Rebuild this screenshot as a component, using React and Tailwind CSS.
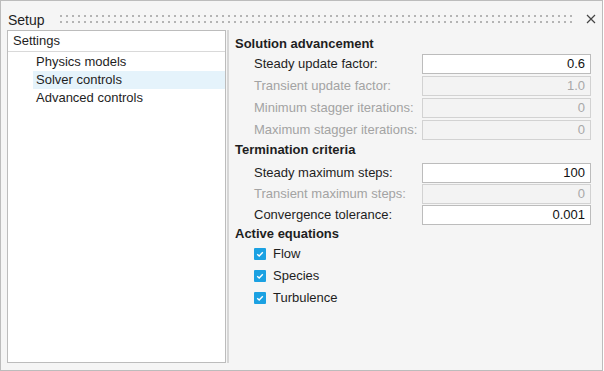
import React from "react";

const font = { fontFamily: '"Liberation Sans", Arial, sans-serif' };

const advancement = [
  { label: "Steady update factor:", value: "0.6", enabled: true },
  { label: "Transient update factor:", value: "1.0" },
  { label: "Minimum stagger iterations:", value: "0" },
  { label: "Maximum stagger iterations:", value: "0" },
];

const termination = [
  { label: "Steady maximum steps:", value: "100", enabled: true },
  { label: "Transient maximum steps:", value: "0" },
  { label: "Convergence tolerance:", value: "0.001", enabled: true },
];

const equations = ["Flow", "Species", "Turbulence"];

function Grip() {
  return (
    <svg width="516" height="8" className="block">
      <defs>
        <pattern id="grip" width="6" height="6" patternUnits="userSpaceOnUse">
          <rect x="0" y="0" width="2" height="2" fill="#b4b4b4" />
        </pattern>
      </defs>
      <rect x="0" y="0" width="516" height="8" fill="url(#grip)" />
    </svg>
  );
}

function CloseIcon() {
  return (
    <svg width="10" height="10" viewBox="0 0 10 10" className="block">
      <path d="M1 1 L9 9 M9 1 L1 9" stroke="#454545" strokeWidth="1.2" fill="none" />
    </svg>
  );
}

function Field({ label, value, enabled, gap }) {
  return (
    <div className={"flex items-center pl-[19px] " + gap}>
      <div className={"w-[168px] text-[13px] leading-[20px] whitespace-nowrap " + (enabled ? "text-[#1e1e1e]" : "text-[#a3a3a3]")}>
        {label}
      </div>
      <div
        className={
          "w-[169px] h-[20px] border px-[5px] text-right text-[13px] leading-[18px] " +
          (enabled ? "bg-white border-[#bcbcbc] text-[#111]" : "bg-[#f3f3f3] border-[#d2d2d2] text-[#a8a8a8]")
        }
      >
        {value}
      </div>
    </div>
  );
}

function Check({ label }) {
  return (
    <div className="flex items-center h-[22px] pl-[19px]">
      <div className="w-[12px] h-[12px] bg-[#1ba1e2] rounded-[1px] flex items-center justify-center">
        <svg width="10" height="10" viewBox="0 0 10 10">
          <path d="M2.2 5.2 L4.2 7 L7.8 3.2" stroke="#fff" strokeWidth="1.4" fill="none" />
        </svg>
      </div>
      <span className="ml-[7px] text-[13px] text-[#1e1e1e]">{label}</span>
    </div>
  );
}

export default function App() {
  return (
    <div style={font} className="w-[603px] h-[371px] bg-[#f5f5f5] border border-[#bcbcbc] flex flex-col">
      <div className="h-[29px] flex items-start shrink-0">
        <span className="ml-[7px] mt-[11px] text-[14px] leading-[16px] text-[#1e1e1e]">Setup</span>
        <div className="ml-[15px] mt-[14px]">
          <Grip />
        </div>
        <div className="ml-[10px] mt-[13px]">
          <CloseIcon />
        </div>
      </div>

      <div className="flex flex-1 pl-[6px] pb-[7px]">
        <div className="w-[219px] border border-[#bcbcbc] bg-white flex flex-col">
          <div className="h-[21px] border-b border-[#d9d9d9] pl-[5px] text-[13px] leading-[20px] text-[#1e1e1e]">
            Settings
          </div>
          <div className="mt-[1px] pl-[25px] text-[13px] text-[#1e1e1e]">
            <div className="h-[18px] leading-[18px] pl-[3px]">Physics models</div>
            <div className="h-[18px] leading-[18px] pl-[3px] bg-[#e5f3fb]">Solver controls</div>
            <div className="h-[18px] leading-[18px] pl-[3px]">Advanced controls</div>
          </div>
        </div>

        <div className="ml-[1px] w-[2px] bg-[#d6d6d6]" />

        <div className="flex-1 pl-[6px] pt-[6px] text-[#1e1e1e]">
          <div className="h-[18px] text-[13px] font-bold leading-[16px]">Solution advancement</div>
          {advancement.map((f) => (
            <Field key={f.label} {...f} gap="mb-[2px]" />
          ))}
          <div className="h-[21px] text-[13px] font-bold leading-[16px]">Termination criteria</div>
          {termination.map((f) => (
            <Field key={f.label} {...f} gap="mb-[1px]" />
          ))}
          <div className="h-[17px] text-[13px] font-bold leading-[16px]">Active equations</div>
          {equations.map((e) => (
            <Check key={e} label={e} />
          ))}
        </div>
      </div>
    </div>
  );
}
